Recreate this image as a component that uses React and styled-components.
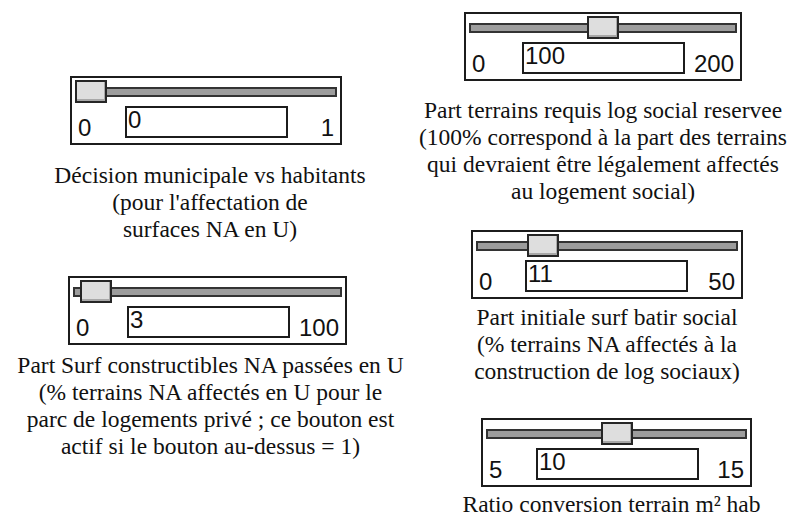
import React from 'react';
import styled, { createGlobalStyle } from 'styled-components';

const SERIF = `"Liberation Serif", "Times New Roman", Tinos, "Nimbus Roman", "Nimbus Roman No9 L", FreeSerif, "Noto Serif", "DejaVu Serif", serif`;
const SANS = `"Liberation Sans", Arimo, Arial, Helvetica, "Nimbus Sans", "Nimbus Sans L", FreeSans, Roboto, sans-serif`;

const Global = createGlobalStyle`
  html, body { margin: 0; padding: 0; background: #fff; }
  body { width: 800px; height: 521px; overflow: hidden; }
`;

const Canvas = styled.main`
  width: 800px;
  height: 521px;
  display: grid;
  grid-template-columns: 400px 400px;
  background: #fff;
  overflow: hidden;
`;

const Column = styled.div`
  display: flex;
  flex-direction: column;
  align-items: flex-start;
`;

const Group = styled.section`
  display: flex;
  flex-direction: column;
  align-items: center;
  width: ${(p) => p.$width}px;
  margin-left: ${(p) => p.$left}px;
  margin-top: ${(p) => p.$top}px;
`;

const Box = styled.div`
  box-sizing: border-box;
  width: 100%;
  height: 69px;
  border: 2px solid #1c1c1c;
  padding: 2px 3px 0;
  display: flex;
  flex-direction: column;
  gap: 3px;
  background: #fff;
`;

const SliderRow = styled.div`
  position: relative;
  height: 23px;
  display: flex;
  align-items: center;
`;

const Track = styled.div`
  flex: 1;
  height: 10px;
  box-sizing: border-box;
  background: #9d9d9d;
  border: 2px solid #333;
`;

const Thumb = styled.div`
  position: absolute;
  top: 0;
  width: 32px;
  height: 23px;
  box-sizing: border-box;
  background: #dedede;
  border: 2px solid #262626;
  box-shadow: inset -1px -2px 0 #a8a8a8;
`;

const ValueRow = styled.div`
  display: grid;
  grid-template-columns: ${(p) => p.$fieldLeft - 5}px 163px 1fr;
  align-items: end;
  height: 32px;
`;

const EdgeLabel = styled.span`
  font-family: ${SANS};
  font-size: 24px;
  line-height: 20px;
  color: #111;
  justify-self: ${(p) => (p.$end ? 'end' : 'start')};
  margin: 0 3px;
`;

const Field = styled.div`
  box-sizing: border-box;
  height: 32px;
  border: 2px solid #1c1c1c;
  background: #fff;
  padding: 0 1px;
  font-family: ${SANS};
  font-size: 24px;
  line-height: 24px;
  color: #111;
  align-self: stretch;
`;

const Caption = styled.p`
  margin: ${(p) => p.$gap}px 0 0 ${(p) => p.$shift * 2}px;
  font-family: ${SERIF};
  font-size: 23.5px;
  line-height: 27px;
  color: #111;
  text-align: center;
  white-space: nowrap;
`;

const columns = [
  [
    {
      min: 0, max: 1, value: 0, top: 76, left: 70, width: 272, fieldLeft: 55,
      gap: 17, shift: 4,
      lines: ['Décision municipale vs habitants', "(pour l'affectation de", 'surfaces NA en U)'],
    },
    {
      min: 0, max: 100, value: 3, top: 33, left: 68, width: 279, fieldLeft: 59,
      gap: 7, shift: 3,
      lines: [
        'Part Surf constructibles NA passées en U',
        '(% terrains NA affectés en U pour le',
        'parc de logements privé ; ce bouton est',
        'actif si le bouton au-dessus = 1)',
      ],
    },
  ],
  [
    {
      min: 0, max: 200, value: 100, top: 12, left: 64, width: 278, fieldLeft: 58,
      gap: 16, shift: 0,
      lines: [
        'Part terrains requis log social reservee',
        '(100% correspond à la part des terrains',
        'qui devraient être légalement affectés',
        'au logement social)',
      ],
    },
    {
      min: 0, max: 50, value: 11, top: 25, left: 71, width: 272, fieldLeft: 54,
      gap: 5, shift: 0,
      lines: ['Part initiale surf batir social', '(% terrains NA affectés à la', 'construction de log sociaux)'],
    },
    {
      min: 5, max: 15, value: 10, top: 33, left: 81, width: 271, fieldLeft: 55,
      gap: 4, shift: -5,
      lines: ['Ratio conversion terrain m² hab'],
    },
  ],
];

function Control({ c }) {
  const frac = (c.value - c.min) / (c.max - c.min);
  return (
    <Group $width={c.width} $left={c.left} $top={c.top}>
      <Box>
        <SliderRow>
          <Track />
          <Thumb style={{ left: `calc((100% - 32px) * ${frac})` }} />
        </SliderRow>
        <ValueRow $fieldLeft={c.fieldLeft}>
          <EdgeLabel>{c.min}</EdgeLabel>
          <Field>{c.value}</Field>
          <EdgeLabel $end>{c.max}</EdgeLabel>
        </ValueRow>
      </Box>
      <Caption $gap={c.gap} $shift={c.shift}>
        {c.lines.map((l, i) => (
          <React.Fragment key={i}>
            {i > 0 && <br />}
            {l}
          </React.Fragment>
        ))}
      </Caption>
    </Group>
  );
}

export default function App() {
  return (
    <>
      <Global />
      <Canvas>
        {columns.map((col, i) => (
          <Column key={i}>
            {col.map((c, j) => (
              <Control key={j} c={c} />
            ))}
          </Column>
        ))}
      </Canvas>
    </>
  );
}
